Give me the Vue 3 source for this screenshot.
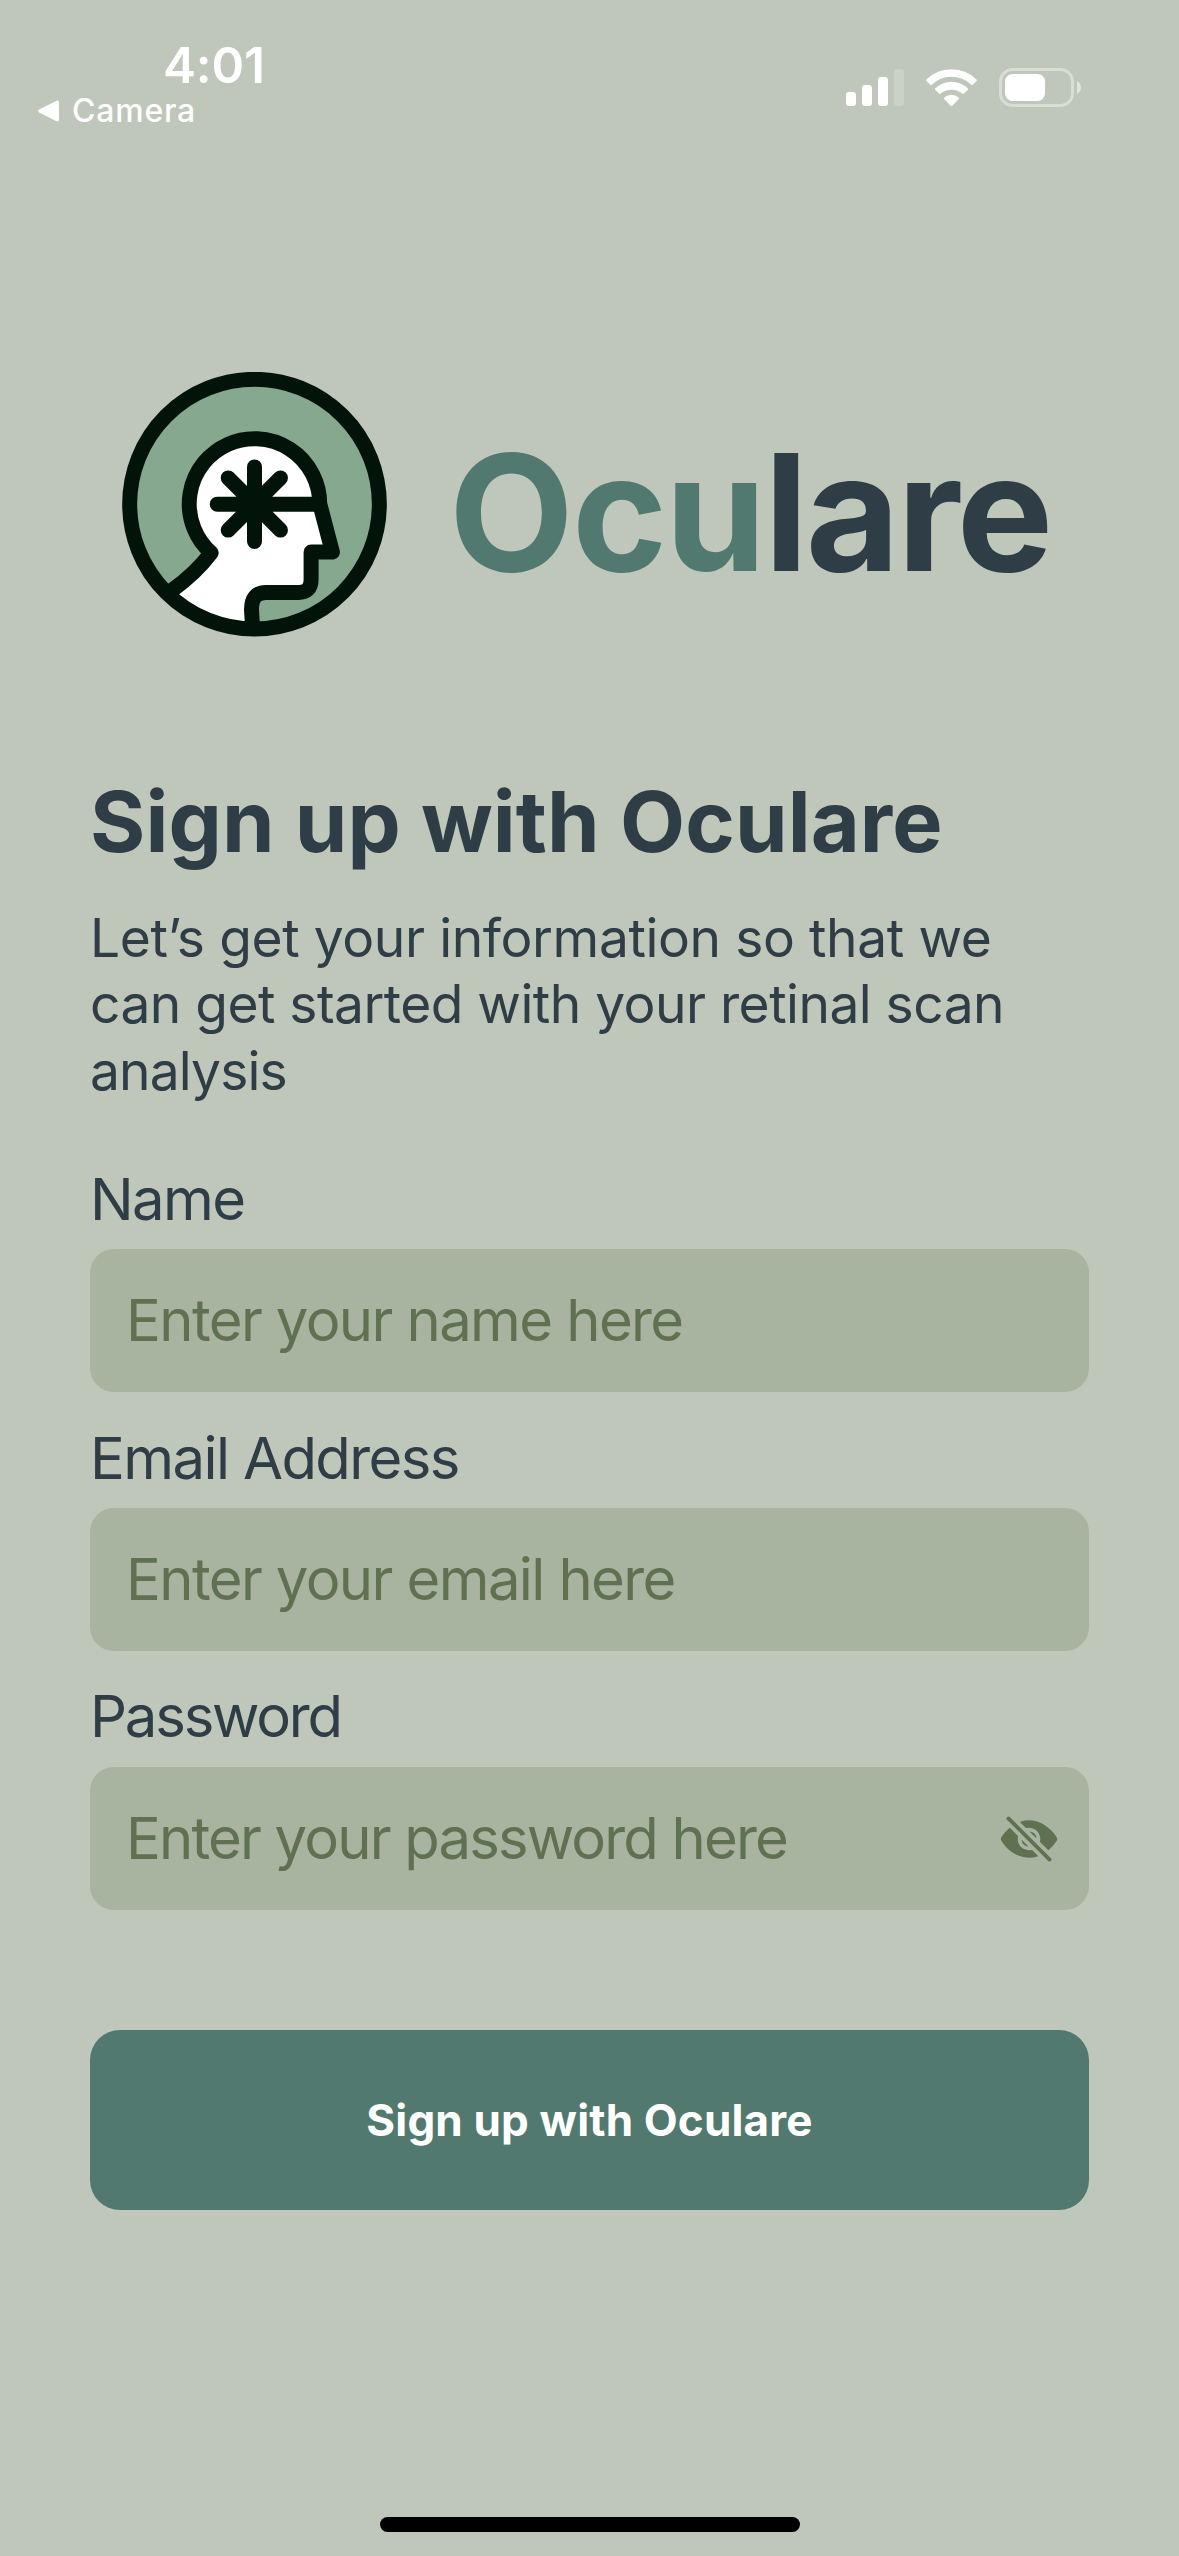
<script setup>
const intro = [
  { text: 'Let’s get your information so that we', cls: 'loose' },
  { text: 'can get started with your retinal scan', cls: 'snug' },
  { text: 'analysis', cls: 'tight' },
]
const fields = [
  { id: 'name', label: 'Name', hint: 'Enter your name here' },
  { id: 'email', label: 'Email Address', hint: 'Enter your email here' },
  { id: 'password', label: 'Password', hint: 'Enter your password here', secret: true },
]
</script>

<template>
  <main class="screen">
    <header class="status">
      <div class="status-left">
        <div class="time">4:01</div>
        <div class="back">
          <svg class="back-arrow" viewBox="0 0 21 22" width="21" height="22">
            <path d="M1.2 9.6 18 .9Q21-.4 21 2.6V19.4Q21 22.4 18 21.1L1.2 12.4Q-1 11 1.2 9.6Z" fill="#fff" />
          </svg>
          <span>Camera</span>
        </div>
      </div>
      <div class="status-right">
        <svg class="signal" viewBox="0 0 58 37" width="58" height="37" fill="#fff">
          <rect x="0" y="23" width="10" height="14" rx="3" />
          <rect x="16" y="16" width="10" height="21" rx="3" />
          <rect x="32" y="8" width="10" height="29" rx="3" />
          <rect x="48" y="0" width="10" height="37" rx="3" opacity=".2" />
        </svg>
        <svg class="wifi" viewBox="378 86 153 112" width="51" height="37.3" fill="#fff">
          <path d="M380 117A106 106 0 0 1 529 117Q532 119.500 529.500 122L518 133Q516 134.500 514 133A86 86 0 0 0 395 133Q393 134.500 391 133L379.500 122Q377 119.500 380 117Z" />
          <path d="M406 144A69 69 0 0 1 503 144Q505.500 146.500 503 149L491.500 160.500Q489.500 162 487.500 160.500A50 50 0 0 0 421.500 160.500Q419.500 162 417.500 160.500L406 149Q403.500 146.500 406 144Z" />
          <path d="M433 171.500A32 32 0 0 1 476 171.500Q478.500 174 476 176.500L457 196Q454.500 199 452 196L433 176.500Q430.500 174 433 171.500Z" />
        </svg>
        <svg class="battery" viewBox="0 0 82 39" width="82" height="39">
          <rect x="1.500" y="1.500" width="72" height="36" rx="12" fill="none" stroke="#fff" stroke-opacity=".4" stroke-width="3" />
          <rect x="6" y="6" width="40" height="27" rx="7.500" fill="#fff" />
          <path d="M78 13Q82 15.500 82 19.500T78 26Z" fill="#fff" fill-opacity=".5" />
        </svg>
      </div>
    </header>

    <section class="brand">
      <svg class="emblem" viewBox="36 36 796 796" width="265" height="265">
        <circle cx="434" cy="433" r="376" fill="#85a88e" />
        <path d="M170 700Q256 645 304 579A196 196 0 1 1 630 432L668 577H604V660Q604 698 566 698H468Q425 698 425 750L428 808A376 376 0 0 1 170 700Z" fill="#fff" />
        <g fill="none" stroke="#02140a" stroke-width="45" stroke-linejoin="round" stroke-linecap="round">
          <path d="M186 692Q258 640 304 579A196 196 0 1 1 630 432L668 577H604V660Q604 698 566 698H468Q425 698 425 750L428 800" />
          <path d="M322 433H630M434 321V545M355 354 512 511M512 354 355 511" />
          <circle cx="434" cy="433" r="375" />
        </g>
      </svg>
      <div class="wordmark"><span class="word-a">Ocu</span><span class="word-b">lare</span></div>
    </section>

    <section class="content">
      <h1>Sign up with Oculare</h1>
      <p class="intro">
        <span v-for="line in intro" :key="line.text" :class="line.cls">{{ line.text }}</span>
      </p>

      <form class="form" @submit.prevent>
        <div v-for="field in fields" :key="field.id" class="field" :class="field.id">
          <label>{{ field.label }}</label>
          <div class="box">
            <span class="hint">{{ field.hint }}</span>
            <svg v-if="field.secret" class="eye" viewBox="0 0 512 512" width="60" height="60" fill="#5f7151">
              <path d="M432 448a15.920 15.920 0 0 1-11.310-4.690l-352-352a16 16 0 0 1 22.620-22.620l352 352A16 16 0 0 1 432 448z" />
              <path d="M248 315.850l-51.790-51.790a2 2 0 0 0-3.390 1.690 64.110 64.110 0 0 0 53.490 53.490 2 2 0 0 0 1.690-3.390zM264 196.150L315.870 248a2 2 0 0 0 3.400-1.690 64.130 64.130 0 0 0-53.550-53.550 2 2 0 0 0-1.720 3.390z" />
              <path d="M491 273.360a32.200 32.200 0 0 0-.1-34.760c-26.460-40.920-60.790-75.680-99.270-100.530C349 110.550 302 96 255.680 96a226.540 226.540 0 0 0-71.820 11.790 4 4 0 0 0-1.560 6.630l47.240 47.240a4 4 0 0 0 3.820 1.050 96 96 0 0 1 116 116 4 4 0 0 0 1.050 3.810l67.950 68a4 4 0 0 0 5.400.24 343.810 343.810 0 0 0 67.240-77.400zM256 352a96 96 0 0 1-93.300-118.630 4 4 0 0 0-1.050-3.810l-66.840-66.870a4 4 0 0 0-5.410-.23c-24.390 20.810-47 46.130-67.670 75.720a31.920 31.920 0 0 0-.64 35.540c26.410 41.330 60.390 76.140 98.280 100.650C162.060 402 207.920 416 255.680 416a238.220 238.220 0 0 0 72.640-11.550 4 4 0 0 0 1.610-6.640l-47.470-47.460a4 4 0 0 0-3.810-1.050A96 96 0 0 1 256 352z" />
            </svg>
          </div>
        </div>
        <button class="submit" type="submit">Sign up with Oculare</button>
      </form>
    </section>

    <footer class="home"><div class="home-bar"></div></footer>
  </main>
</template>

<style>
body {
  margin: 0;
  background: #bfc6ba;
}
</style>

<style scoped>
.screen {
  box-sizing: border-box;
  width: 1179px;
  height: 2556px;
  display: flex;
  flex-direction: column;
  overflow: hidden;
  background: #bfc6ba;
  color: #2f3d47;
  font-family: Inter, "Liberation Sans", sans-serif;
}
.status {
  height: 372px;
  flex: none;
  display: flex;
  justify-content: space-between;
  color: #fff;
}
.status-left {
  padding: 35px 0 0 38px;
}
.time {
  padding-left: 125px;
  font-size: 49.500px;
  line-height: 60px;
  font-weight: 600;
  letter-spacing: -0.13px;
}
.back {
  display: flex;
  align-items: center;
  gap: 13px;
  margin-top: -4px;
  font-size: 32px;
  line-height: 40px;
  font-weight: 500;
  letter-spacing: 0.800px;
}
.status-right {
  display: flex;
  align-items: flex-start;
  padding: 68px 98px 0 0;
}
.signal {
  margin-top: 1px;
}
.wifi {
  margin: 0.700px 22px 0;
}
.brand {
  height: 265px;
  flex: none;
  display: flex;
  gap: 62px;
  padding-left: 122px;
}
.wordmark {
  margin-top: 8px;
  font-size: 162px;
  line-height: 265px;
  font-weight: 700;
  white-space: nowrap;
}
.word-a {
  color: #527970;
  letter-spacing: -1.900px;
}
.word-b {
  letter-spacing: -2.500px;
}
.content {
  padding: 134px 90px 0;
}
h1 {
  margin: 0;
  font-size: 84.500px;
  line-height: 100px;
  font-weight: 700;
  letter-spacing: 0.100px;
}
.intro {
  margin: 33.500px 0 60px;
  font-size: 53.300px;
  line-height: 66.500px;
}
.intro span {
  display: block;
  white-space: nowrap;
}
.loose {
  letter-spacing: -0.400px;
}
.snug {
  letter-spacing: -0.530px;
}
.tight {
  letter-spacing: -0.850px;
}
.form {
  display: flex;
  flex-direction: column;
  gap: 31px;
}
.field {
  display: flex;
  flex-direction: column;
  gap: 15px;
  font-size: 58px;
}
label {
  line-height: 70px;
  letter-spacing: -1.600px;
}
.password label {
  margin: -1px 0 1px;
  letter-spacing: -2.200px;
}
.box {
  box-sizing: border-box;
  height: 143px;
  display: flex;
  align-items: center;
  justify-content: space-between;
  padding: 0 30px 0 36px;
  border-radius: 24px;
  background: #a8b4a0;
  color: #5f7151;
}
.hint {
  padding-bottom: 2px;
  line-height: 70px;
  letter-spacing: -1.610px;
}
.password .hint {
  letter-spacing: -1.820px;
}
.submit {
  height: 180px;
  margin-top: 89px;
  padding: 0;
  border: 0;
  border-radius: 30px;
  background: #527970;
  color: #fff;
  font-family: inherit;
  font-size: 44px;
  font-weight: 700;
  letter-spacing: 0.170px;
}
.home {
  display: flex;
  justify-content: center;
  margin-top: auto;
  padding: 0 0 24px 1px;
}
.home-bar {
  width: 420px;
  height: 15px;
  border-radius: 8px;
  background: #000;
}
</style>
